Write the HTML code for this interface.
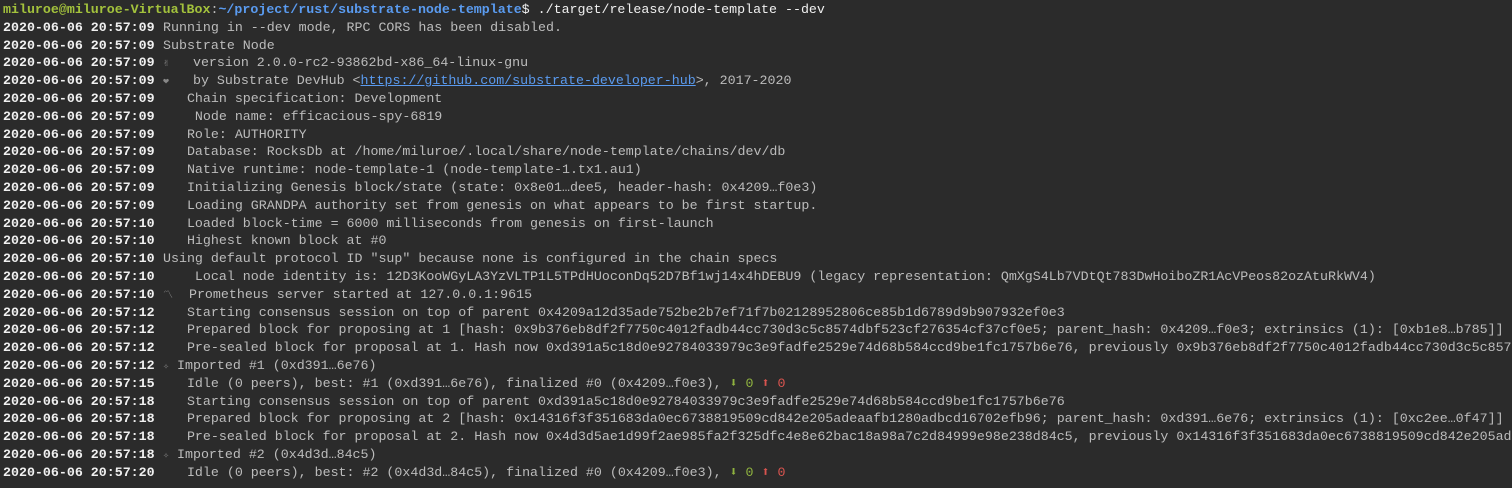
<!DOCTYPE html>
<html><head><meta charset="utf-8"><style>
html,body{margin:0;padding:0;background:#2b2b2b;width:1512px;height:488px;overflow:hidden}
.t{position:absolute;left:3px;top:1px;font-family:"Liberation Mono","DejaVu Sans Mono",monospace;font-size:13.3px;line-height:17.8px;color:#bcbcbc}
.l{height:17.8px;white-space:pre}
b{display:inline-block;width:160px;color:#f0f0f0;font-weight:bold}
.u{color:#a3c23c;font-weight:bold}
.p{color:#5a9bf0;font-weight:bold}
.a{color:#5a9bf0;text-decoration:underline}
.e{color:#888;font-size:10px}
.g{color:#8fb33f}.r{color:#d9544f}
</style></head><body><div class="t"><div class="l"><span class="u">miluroe@miluroe-VirtualBox</span>:<span class="p">~/project/rust/substrate-node-template</span><span style="color:#f0f0f0">$ ./target/release/node-template --dev</span></div><div class="l"><b>2020-06-06 20:57:09</b>Running in --dev mode, RPC CORS has been disabled.</div><div class="l"><b>2020-06-06 20:57:09</b>Substrate Node</div><div class="l"><b>2020-06-06 20:57:09</b><span class="e">✌</span>   version 2.0.0-rc2-93862bd-x86_64-linux-gnu</div><div class="l"><b>2020-06-06 20:57:09</b><span class="e">❤</span>   by Substrate DevHub &lt;<span class="a">https://github.com/substrate-developer-hub</span>&gt;, 2017-2020</div><div class="l"><b>2020-06-06 20:57:09</b>   Chain specification: Development</div><div class="l"><b>2020-06-06 20:57:09</b>    Node name: efficacious-spy-6819</div><div class="l"><b>2020-06-06 20:57:09</b>   Role: AUTHORITY</div><div class="l"><b>2020-06-06 20:57:09</b>   Database: RocksDb at /home/miluroe/.local/share/node-template/chains/dev/db</div><div class="l"><b>2020-06-06 20:57:09</b>   Native runtime: node-template-1 (node-template-1.tx1.au1)</div><div class="l"><b>2020-06-06 20:57:09</b>   Initializing Genesis block/state (state: 0x8e01…dee5, header-hash: 0x4209…f0e3)</div><div class="l"><b>2020-06-06 20:57:09</b>   Loading GRANDPA authority set from genesis on what appears to be first startup.</div><div class="l"><b>2020-06-06 20:57:10</b>   Loaded block-time = 6000 milliseconds from genesis on first-launch</div><div class="l"><b>2020-06-06 20:57:10</b>   Highest known block at #0</div><div class="l"><b>2020-06-06 20:57:10</b>Using default protocol ID "sup" because none is configured in the chain specs</div><div class="l"><b>2020-06-06 20:57:10</b>    Local node identity is: 12D3KooWGyLA3YzVLTP1L5TPdHUoconDq52D7Bf1wj14x4hDEBU9 (legacy representation: QmXgS4Lb7VDtQt783DwHoiboZR1AcVPeos82ozAtuRkWV4)</div><div class="l"><b>2020-06-06 20:57:10</b><span class="e">〽</span>  Prometheus server started at 127.0.0.1:9615</div><div class="l"><b>2020-06-06 20:57:12</b>   Starting consensus session on top of parent 0x4209a12d35ade752be2b7ef71f7b02128952806ce85b1d6789d9b907932ef0e3</div><div class="l"><b>2020-06-06 20:57:12</b>   Prepared block for proposing at 1 [hash: 0x9b376eb8df2f7750c4012fadb44cc730d3c5c8574dbf523cf276354cf37cf0e5; parent_hash: 0x4209…f0e3; extrinsics (1): [0xb1e8…b785]]</div><div class="l"><b>2020-06-06 20:57:12</b>   Pre-sealed block for proposal at 1. Hash now 0xd391a5c18d0e92784033979c3e9fadfe2529e74d68b584ccd9be1fc1757b6e76, previously 0x9b376eb8df2f7750c4012fadb44cc730d3c5c8574dbf</div><div class="l"><b>2020-06-06 20:57:12</b><span class="e">✧</span> Imported #1 (0xd391…6e76)</div><div class="l"><b>2020-06-06 20:57:15</b>   Idle (0 peers), best: #1 (0xd391…6e76), finalized #0 (0x4209…f0e3), <span class="g">⬇ 0</span> <span class="r">⬆ 0</span></div><div class="l"><b>2020-06-06 20:57:18</b>   Starting consensus session on top of parent 0xd391a5c18d0e92784033979c3e9fadfe2529e74d68b584ccd9be1fc1757b6e76</div><div class="l"><b>2020-06-06 20:57:18</b>   Prepared block for proposing at 2 [hash: 0x14316f3f351683da0ec6738819509cd842e205adeaafb1280adbcd16702efb96; parent_hash: 0xd391…6e76; extrinsics (1): [0xc2ee…0f47]]</div><div class="l"><b>2020-06-06 20:57:18</b>   Pre-sealed block for proposal at 2. Hash now 0x4d3d5ae1d99f2ae985fa2f325dfc4e8e62bac18a98a7c2d84999e98e238d84c5, previously 0x14316f3f351683da0ec6738819509cd842e205adeaafb</div><div class="l"><b>2020-06-06 20:57:18</b><span class="e">✧</span> Imported #2 (0x4d3d…84c5)</div><div class="l"><b>2020-06-06 20:57:20</b>   Idle (0 peers), best: #2 (0x4d3d…84c5), finalized #0 (0x4209…f0e3), <span class="g">⬇ 0</span> <span class="r">⬆ 0</span></div></div></body></html>
